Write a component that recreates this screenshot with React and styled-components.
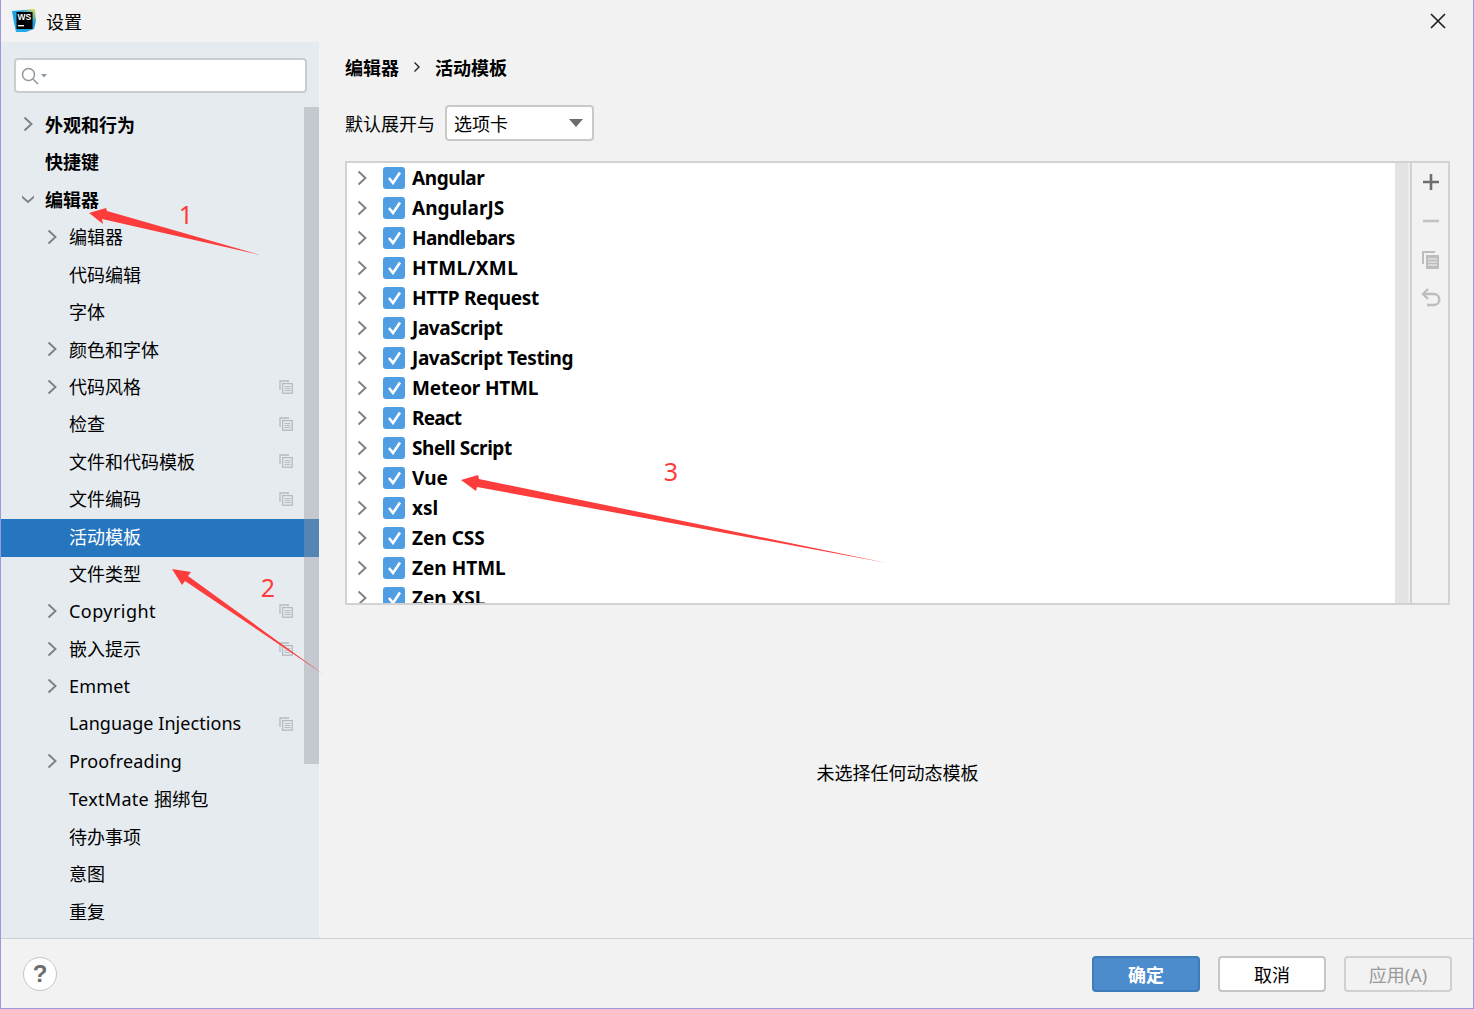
import React from 'react';
import styled, { createGlobalStyle } from 'styled-components';

const cjk = '"Noto Sans", "Noto Sans CJK SC", sans-serif';

const GlobalStyle = createGlobalStyle`
  html, body {
    margin: 0;
    padding: 0;
    background: #f2f2f2;
  }
  * {
    box-sizing: border-box;
  }
`;

const sideItems = [
  { label: '外观和行为', level: 0, bold: true, arrow: 'right' },
  { label: '快捷键', level: 0, bold: true },
  { label: '编辑器', level: 0, bold: true, arrow: 'down' },
  { label: '编辑器', level: 1, arrow: 'right' },
  { label: '代码编辑', level: 1 },
  { label: '字体', level: 1 },
  { label: '颜色和字体', level: 1, arrow: 'right' },
  { label: '代码风格', level: 1, arrow: 'right', copy: true },
  { label: '检查', level: 1, copy: true },
  { label: '文件和代码模板', level: 1, copy: true },
  { label: '文件编码', level: 1, copy: true },
  { label: '活动模板', level: 1, active: true },
  { label: '文件类型', level: 1 },
  { label: 'Copyright', level: 1, arrow: 'right', copy: true, track: 0.45 },
  { label: '嵌入提示', level: 1, arrow: 'right', copy: true },
  { label: 'Emmet', level: 1, arrow: 'right', track: 0.2 },
  { label: 'Language Injections', level: 1, copy: true, track: 0.05 },
  { label: 'Proofreading', level: 1, arrow: 'right', track: 0.15 },
  { label: 'TextMate 捆绑包', level: 1, track: 0.3 },
  { label: '待办事项', level: 1 },
  { label: '意图', level: 1 },
  { label: '重复', level: 1 },
];

const templates = [
  { name: 'Angular', track: -0.43 },
  { name: 'AngularJS' },
  { name: 'Handlebars', track: -0.6 },
  { name: 'HTML/XML', track: 0.37 },
  { name: 'HTTP Request', track: -0.33 },
  { name: 'JavaScript', track: -0.4 },
  { name: 'JavaScript Testing', track: -0.4 },
  { name: 'Meteor HTML', track: -0.18 },
  { name: 'React', track: -0.8 },
  { name: 'Shell Script', track: -0.45 },
  { name: 'Vue' },
  { name: 'xsl' },
  { name: 'Zen CSS' },
  { name: 'Zen HTML' },
  { name: 'Zen XSL' },
];

const Chevron = ({ dir = 'right', color = '#808080' }) => (
  <svg width="12" height="16" viewBox="0 0 12 16" fill="none" stroke={color} strokeWidth="1.9">
    {dir === 'right' ? <path d="M2.5 1.5 L9.5 8 L2.5 14.5" /> : <path d="M-1 5 L6 11 L13 5" />}
  </svg>
);

const CopyIcon = ({ color = '#b4bac0' }) => (
  <svg width="14" height="14" viewBox="0 0 14 14" fill="none" stroke={color} strokeWidth="1.3">
    <path d="M1 10 V1 H10" />
    <rect x="3.6" y="3.6" width="9.6" height="9.6" />
    <path d="M5.5 6.6 H11.5 M5.5 8.6 H11.5 M5.5 10.6 H11.5" strokeWidth="1" />
  </svg>
);

const Logo = () => (
  <svg width="24" height="24" viewBox="0 0 24 24">
    <defs>
      <linearGradient id="wsGrad" x1="0" y1="1" x2="1" y2="0">
        <stop offset="0" stopColor="#22b3e8" />
        <stop offset="0.65" stopColor="#1f9be0" />
        <stop offset="1" stopColor="#f5e63b" />
      </linearGradient>
    </defs>
    <polygon points="0,2 12,1 23,0 24,12 22,20 14,23 4,23 2,14" fill="url(#wsGrad)" />
    <rect x="4.5" y="3" width="16" height="17" fill="#000" />
    <text x="5.5" y="11" fontFamily='"Liberation Sans", sans-serif' fontWeight="700" fontSize="8.5" fill="#fff">WS</text>
    <rect x="6" y="16" width="6" height="1.4" fill="#fff" />
  </svg>
);

const App = () => (
  <Window>
    <GlobalStyle />
    <TitleBar>
      <Logo />
      <TitleText>设置</TitleText>
      <CloseIcon viewBox="0 0 16 16">
        <path d="M1 1 L15 15 M15 1 L1 15" />
      </CloseIcon>
    </TitleBar>

    <Body>
      <Sidebar>
        <SearchBox>
          <svg width="28" height="20" viewBox="0 0 28 20" fill="none" stroke="#8f989e" strokeWidth="1.5">
            <circle cx="8.5" cy="8.5" r="6" />
            <path d="M13 13 L18 18" />
            <path d="M21 8 H27 L24 11.5 Z" fill="#8f989e" stroke="none" />
          </svg>
        </SearchBox>
        <Tree>
          {sideItems.map((item, i) => (
            <TreeRow key={i} $active={item.active} $level={item.level}>
              <ArrowSlot>{item.arrow && <Chevron dir={item.arrow} />}</ArrowSlot>
              <TreeLabel $bold={item.bold} $active={item.active} $track={item.track}>{item.label}</TreeLabel>
              {item.copy && <CopySlot><CopyIcon /></CopySlot>}
            </TreeRow>
          ))}
          <TreeScrollbar />
        </Tree>
      </Sidebar>

      <Main>
        <Crumbs>
          <span>编辑器</span>
          <svg width="8" height="12" viewBox="0 0 8 12" fill="none" stroke="#222" strokeWidth="1.4">
            <path d="M1.5 1.5 L6 6 L1.5 10.5" />
          </svg>
          <span>活动模板</span>
        </Crumbs>
        <ExpandRow>
          <ExpandLabel>默认展开与</ExpandLabel>
          <Select>
            <span>选项卡</span>
            <SelectCaret />
          </Select>
        </ExpandRow>
        <ListPanel>
          <ListArea>
            {templates.map((t) => (
              <TemplateRow key={t.name}>
                <ArrowSlotList><Chevron /></ArrowSlotList>
                <Check>
                  <svg width="15" height="14" viewBox="0 0 15 14" fill="none" stroke="#fff" strokeWidth="2.6">
                    <path d="M2 7 L6 12 L13 1.5" />
                  </svg>
                </Check>
                <TemplateName $track={t.track}>{t.name}</TemplateName>
              </TemplateRow>
            ))}
          </ListArea>
          <ListScroll />
          <ListTools>
            <ToolSlot>
              <svg width="16" height="16" viewBox="0 0 16 16" stroke="#6e6e6e" strokeWidth="2.6">
                <path d="M8 0 V16 M0 8 H16" />
              </svg>
            </ToolSlot>
            <ToolSlot>
              <svg width="16" height="16" viewBox="0 0 16 16" stroke="#c2c2c2" strokeWidth="2.6">
                <path d="M0 8 H16" />
              </svg>
            </ToolSlot>
            <ToolSlot>
              <svg width="20" height="20" viewBox="0 0 20 20" fill="none" stroke="#bdbdbd">
                <path d="M2 14 V2 H14" strokeWidth="2" />
                <rect x="5" y="5" width="13" height="14" fill="#bdbdbd" stroke="none" />
                <path d="M7 9 H16 M7 12 H16 M7 15 H16" stroke="#f2f2f2" strokeWidth="1" />
              </svg>
            </ToolSlot>
            <ToolSlot>
              <svg width="20" height="20" viewBox="0 0 20 20" fill="none" stroke="#bdbdbd" strokeWidth="2.4">
                <path d="M7 1 L2 6 L7 11" />
                <path d="M2 6 H13 C20 6 20 17 13 17 H6" />
              </svg>
            </ToolSlot>
          </ListTools>
        </ListPanel>
        <EmptyText>未选择任何动态模板</EmptyText>
      </Main>
    </Body>

    <Footer>
      <HelpButton>?</HelpButton>
      <FooterButtons>
        <PrimaryButton>确定</PrimaryButton>
        <DefaultButton>取消</DefaultButton>
        <DisabledButton>应用(A)</DisabledButton>
      </FooterButtons>
    </Footer>

    <Annotations viewBox="0 0 1474 1009">
      <polygon points="89,213 106,208 107,211 260,255 102,219 103,224" />
      <polygon points="172,569 191,572 188,576 323,674 185,581 182,585" />
      <polygon points="461,480 478,475 479,479 887,563 477,487 476,491" />
    </Annotations>
    <Mark $x={186} $y={214}>1</Mark>
    <Mark $x={268} $y={587}>2</Mark>
    <Mark $x={671} $y={471}>3</Mark>
  </Window>
);

export default App;

const Window = styled.div`
  position: relative;
  width: 1474px;
  height: 1009px;
  display: flex;
  flex-direction: column;
  background: #f2f2f2;
  border: 1px solid #9a9ade;
  border-top: none;
  font-family: ${cjk};
  color: #000;
  overflow: hidden;
`;

const TitleBar = styled.div`
  height: 42px;
  flex: none;
  display: flex;
  align-items: center;
  padding: 0 27px 0 11px;
  gap: 10px;
`;

const TitleText = styled.div`
  font-size: 18px;
  flex: 1;
`;

const CloseIcon = styled.svg`
  width: 16px;
  height: 16px;
  stroke: #222;
  stroke-width: 1.7;
  fill: none;
`;

const Body = styled.div`
  flex: 1;
  display: flex;
  min-height: 0;
`;

const Sidebar = styled.div`
  width: 318px;
  flex: none;
  background: #e6ebf0;
  padding-top: 16px;
  display: flex;
  flex-direction: column;
`;

const SearchBox = styled.div`
  height: 35px;
  width: 293px;
  margin-left: 13px;
  background: #fff;
  border: 2px solid #c9cdd0;
  border-radius: 4px;
  display: flex;
  align-items: center;
  padding-left: 4px;
  flex: none;
`;

const Tree = styled.div`
  position: relative;
  margin-top: 14px;
  flex: 1;
`;

const TreeRow = styled.div`
  height: 37.47px;
  display: flex;
  align-items: center;
  padding-left: ${(p) => (p.$level === 0 ? 21 : 45)}px;
  background: ${(p) => (p.$active ? '#2675bf' : 'transparent')};
`;

const ArrowSlot = styled.div`
  width: 23px;
  flex: none;
  display: flex;
  align-items: center;
  padding-bottom: 3px;
`;

const TreeLabel = styled.div`
  flex: 1;
  font-size: 18px;
  padding-bottom: 4px;
  white-space: nowrap;
  letter-spacing: ${(p) => p.$track || 0}px;
  font-weight: ${(p) => (p.$bold ? 700 : 400)};
  color: ${(p) => (p.$active ? '#fff' : '#000')};
`;

const CopySlot = styled.div`
  width: 14px;
  margin-right: 26px;
  padding-bottom: 3px;
  display: flex;
`;

const TreeScrollbar = styled.div`
  position: absolute;
  top: 0;
  right: 0;
  width: 15px;
  height: 657px;
  background: rgba(150, 155, 165, 0.42);
`;

const Main = styled.div`
  flex: 1;
  min-width: 0;
  padding: 0 23px 0 26px;
  display: flex;
  flex-direction: column;
`;

const Crumbs = styled.div`
  height: 50px;
  display: flex;
  align-items: center;
  gap: 14px;
  font-size: 18px;
  font-weight: 700;
`;

const ExpandRow = styled.div`
  margin-top: 13px;
  height: 35px;
  display: flex;
  align-items: center;
  gap: 10px;
`;

const ExpandLabel = styled.div`
  font-size: 18px;
`;

const Select = styled.div`
  width: 149px;
  height: 36px;
  background: #fff;
  border: 2px solid #c9c9c9;
  border-radius: 4px;
  display: flex;
  align-items: center;
  justify-content: space-between;
  padding: 0 9px 0 7px;
  font-size: 18px;
`;

const SelectCaret = styled.div`
  width: 0;
  height: 0;
  border-left: 7px solid transparent;
  border-right: 7px solid transparent;
  border-top: 8px solid #6e6e6e;
`;

const ListPanel = styled.div`
  margin-top: 21px;
  height: 444px;
  display: flex;
  border: 2px solid #d2d2d2;
  flex: none;
`;

const ListArea = styled.div`
  flex: 1;
  background: #fff;
  overflow: hidden;
`;

const TemplateRow = styled.div`
  height: 30px;
  display: flex;
  align-items: center;
`;

const ArrowSlotList = styled.div`
  width: 36px;
  padding-left: 9px;
  display: flex;
  flex: none;
`;

const Check = styled.div`
  width: 22px;
  height: 22px;
  flex: none;
  background: #4f9ee3;
  border-radius: 3px;
  display: flex;
  align-items: center;
  justify-content: center;
`;

const TemplateName = styled.div`
  margin-left: 7px;
  font-size: 19px;
  font-weight: 700;
  white-space: nowrap;
  letter-spacing: ${(p) => p.$track || 0}px;
`;

const ListScroll = styled.div`
  width: 15px;
  height: 100%;
  flex: none;
  background: #e3e3e3;
  border-right: 2px solid #ececec;
`;

const ListTools = styled.div`
  width: 38px;
  flex: none;
  border-left: 2px solid #d2d2d2;
  padding-left: 1px;
  display: flex;
  flex-direction: column;
  align-items: center;
`;

const ToolSlot = styled.div`
  height: 38.7px;
  display: flex;
  align-items: center;
  justify-content: center;
  flex: none;
`;

const EmptyText = styled.div`
  margin-top: 156px;
  text-align: center;
  font-size: 18px;
  line-height: 24px;
`;

const Footer = styled.div`
  height: 70px;
  flex: none;
  border-top: 1px solid #cfcfcf;
  display: flex;
  align-items: center;
  justify-content: space-between;
  padding: 0 21px 0 22px;
`;

const HelpButton = styled.div`
  width: 34px;
  height: 34px;
  border-radius: 50%;
  background: #fff;
  border: 1.5px solid #c6c6c6;
  color: #6e6e6e;
  font-family: "Liberation Sans", sans-serif;
  font-weight: 700;
  font-size: 24px;
  display: flex;
  align-items: center;
  justify-content: center;
`;

const FooterButtons = styled.div`
  display: flex;
  gap: 18px;
`;

const DefaultButton = styled.div`
  width: 108px;
  height: 36px;
  border-radius: 4px;
  background: #fff;
  border: 2px solid #c6c6c6;
  display: flex;
  align-items: center;
  justify-content: center;
  font-size: 18px;
`;

const PrimaryButton = styled(DefaultButton)`
  background: #4d8ccc;
  border-color: #3f7cba;
  color: #fff;
  font-weight: 700;
`;

const DisabledButton = styled(DefaultButton)`
  background: transparent;
  border-color: #d0d0d0;
  color: #999;
`;

const Annotations = styled.svg`
  position: absolute;
  left: -1px;
  top: 0;
  width: 1474px;
  height: 1009px;
  pointer-events: none;
  fill: #fd3c3c;
`;

const Mark = styled.div`
  position: absolute;
  left: ${(p) => p.$x - 1}px;
  top: ${(p) => p.$y}px;
  transform: translate(-50%, -50%);
  color: #fd3c3c;
  font-family: "Noto Sans", sans-serif;
  font-size: 25px;
  line-height: 1;
`;
